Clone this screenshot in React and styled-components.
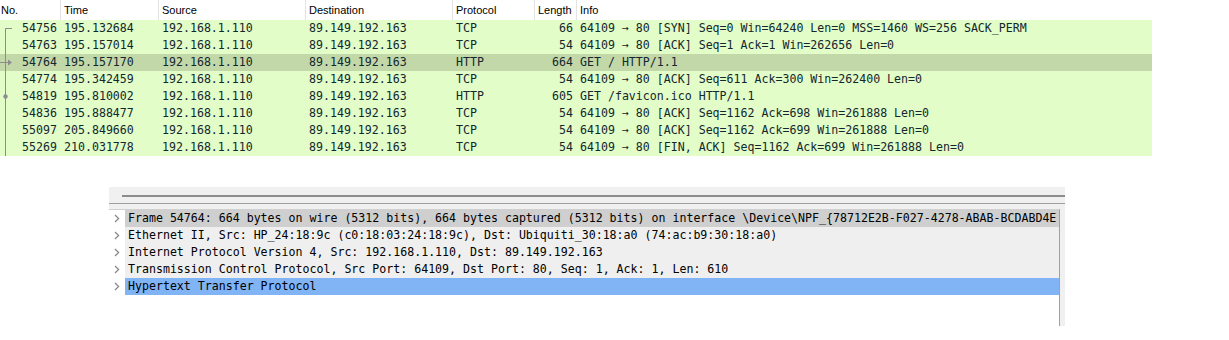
import React from "react";
import styled, { createGlobalStyle } from "styled-components";

const GlobalStyle = createGlobalStyle`
  body {
    margin: 0;
    background: #ffffff;
  }
`;

const COLUMNS = "60px 98px 147px 147px 82px 42px 576px";
const MONO = `"DejaVu Sans Mono", "Liberation Mono", monospace`;

const packets = [
  { no: "54756", time: "195.132684", proto: "TCP", len: "66", mark: "start", info: "64109 → 80 [SYN] Seq=0 Win=64240 Len=0 MSS=1460 WS=256 SACK_PERM" },
  { no: "54763", time: "195.157014", proto: "TCP", len: "54", info: "64109 → 80 [ACK] Seq=1 Ack=1 Win=262656 Len=0" },
  { no: "54764", time: "195.157170", proto: "HTTP", len: "664", mark: "arrow", selected: true, info: "GET / HTTP/1.1" },
  { no: "54774", time: "195.342459", proto: "TCP", len: "54", info: "64109 → 80 [ACK] Seq=611 Ack=300 Win=262400 Len=0" },
  { no: "54819", time: "195.810002", proto: "HTTP", len: "605", mark: "dot", info: "GET /favicon.ico HTTP/1.1" },
  { no: "54836", time: "195.888477", proto: "TCP", len: "54", info: "64109 → 80 [ACK] Seq=1162 Ack=698 Win=261888 Len=0" },
  { no: "55097", time: "205.849660", proto: "TCP", len: "54", info: "64109 → 80 [ACK] Seq=1162 Ack=699 Win=261888 Len=0" },
  { no: "55269", time: "210.031778", proto: "TCP", len: "54", info: "64109 → 80 [FIN, ACK] Seq=1162 Ack=699 Win=261888 Len=0" },
];

const details = [
  { text: "Frame 54764: 664 bytes on wire (5312 bits), 664 bytes captured (5312 bits) on interface \\Device\\NPF_{78712E2B-F027-4278-ABAB-BCDABD4E", state: "hover" },
  { text: "Ethernet II, Src: HP_24:18:9c (c0:18:03:24:18:9c), Dst: Ubiquiti_30:18:a0 (74:ac:b9:30:18:a0)" },
  { text: "Internet Protocol Version 4, Src: 192.168.1.110, Dst: 89.149.192.163" },
  { text: "Transmission Control Protocol, Src Port: 64109, Dst Port: 80, Seq: 1, Ack: 1, Len: 610" },
  { text: "Hypertext Transfer Protocol", state: "selected" },
];

const RelationMark = ({ mark }) => (
  <MarkSvg width="13" height="17" viewBox="0 0 13 17">
    {mark === "start" ? (
      <path d="M5.5 8.5V17M5.5 8.5H12" stroke="#8c8c8c" strokeWidth="1" fill="none" />
    ) : (
      <path d="M5.5 0V17" stroke="#8c8c8c" strokeWidth="1" fill="none" />
    )}
    {mark === "arrow" && (
      <>
        <path d="M0 8.5H9" stroke="#8c8c8c" strokeWidth="1" />
        <path d="M8 5.5L12 8.5L8 11.5Z" fill="#8c8c8c" />
      </>
    )}
    {mark === "dot" && <circle cx="5.5" cy="8.5" r="2.2" fill="#8c8c8c" />}
  </MarkSvg>
);

const Chevron = () => (
  <svg width="6" height="9" viewBox="0 0 6 9">
    <path d="M1 1L4.6 4.5L1 8" stroke="#8a8a8a" strokeWidth="1.3" fill="none" />
  </svg>
);

const App = () => {
  return (
    <>
      <GlobalStyle />
      <PacketList>
        <HeaderRow>
          <HeaderCell $first>No.</HeaderCell>
          <HeaderCell>Time</HeaderCell>
          <HeaderCell>Source</HeaderCell>
          <HeaderCell>Destination</HeaderCell>
          <HeaderCell>Protocol</HeaderCell>
          <HeaderCell>Length</HeaderCell>
          <HeaderCell>Info</HeaderCell>
        </HeaderRow>
        {packets.map((p) => (
          <PacketRow key={p.no} $selected={p.selected}>
            <NoCell>
              <RelationMark mark={p.mark} />
              <span>{p.no}</span>
            </NoCell>
            <Cell>{p.time}</Cell>
            <Cell>192.168.1.110</Cell>
            <Cell>89.149.192.163</Cell>
            <Cell>{p.proto}</Cell>
            <Cell $right>{p.len}</Cell>
            <Cell>{p.info}</Cell>
          </PacketRow>
        ))}
      </PacketList>

      <DetailsPane>
        <Splitter>
          <SplitterHandle />
        </Splitter>
        <TreeView>
          {details.map((d) => (
            <TreeRow key={d.text}>
              <Expander>
                <Chevron />
              </Expander>
              <TreeLabel $state={d.state}>{d.text}</TreeLabel>
            </TreeRow>
          ))}
        </TreeView>
      </DetailsPane>
    </>
  );
};

export default App;

const PacketList = styled.div`
  width: 1152px;
`;

const HeaderRow = styled.div`
  display: grid;
  grid-template-columns: ${COLUMNS};
  height: 20px;
  background: #ffffff;
`;

const HeaderCell = styled.div`
  font-family: "Liberation Sans", Arial, sans-serif;
  font-size: 11px;
  line-height: 20px;
  color: #000000;
  padding-left: ${(p) => (p.$first ? "1px" : "3px")};
  border-left: ${(p) => (p.$first ? "none" : "1px solid #e3e3e3")};
  white-space: nowrap;
  overflow: hidden;
`;

const PacketRow = styled.div`
  display: grid;
  grid-template-columns: ${COLUMNS};
  height: 17px;
  background: ${(p) => (p.$selected ? "#c3d8a9" : "#e2fdc8")};
  font-family: ${MONO};
  font-size: 11.6px;
  line-height: 17px;
  color: #12272e;
`;

const Cell = styled.div`
  padding: 0 3px 0 4px;
  text-align: ${(p) => (p.$right ? "right" : "left")};
  white-space: nowrap;
  overflow: hidden;
`;

const NoCell = styled.div`
  display: flex;
  align-items: stretch;
  padding-right: 3px;

  span {
    flex: 1;
    text-align: right;
  }
`;

const MarkSvg = styled.svg`
  flex-shrink: 0;
  display: block;
`;

const DetailsPane = styled.div`
  margin: 31px 0 0 109px;
  width: 956px;
  background: #f0f0f0;
`;

const Splitter = styled.div`
  height: 17px;
  padding: 8px 0 0 13px;
  box-sizing: border-box;
  border-bottom: 1px solid #a0a0a0;
`;

const SplitterHandle = styled.div`
  height: 2px;
  background: #8c8c8c;
`;

const TreeView = styled.div`
  margin-top: 5px;
  width: 951px;
  height: 117px;
  box-sizing: border-box;
  background: #ffffff;
  border-top: 1px solid #d0d0d0;
  border-right: 1px solid #a0a0a0;
`;

const TreeRow = styled.div`
  display: flex;
  height: 17px;
`;

const Expander = styled.div`
  width: 16px;
  flex-shrink: 0;
  display: flex;
  align-items: center;
  justify-content: center;
  padding-right: 1px;
  box-sizing: border-box;
`;

const TreeLabel = styled.div`
  flex: 1;
  min-width: 0;
  padding-left: 3px;
  font-family: ${MONO};
  font-size: 11.6px;
  line-height: 17px;
  color: #000000;
  white-space: nowrap;
  overflow: hidden;
  background: ${(p) =>
    p.$state === "selected" ? "#80b4f5" : p.$state === "hover" ? "#cfcfcf" : "#efefef"};
`;
